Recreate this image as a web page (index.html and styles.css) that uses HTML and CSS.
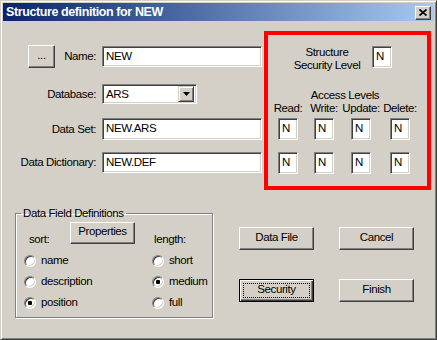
FILE: index.html
```html
<!DOCTYPE html>
<html lang="en">
<head>
  <meta charset="UTF-8">
  <title>Structure definition for NEW</title>
  <link rel="stylesheet" href="styles.css">
</head>
<body>

<div class="window">
  <div class="titlebar">
    <span class="title">Structure definition for NEW</span>
    <button class="close">
      <svg width="8" height="7" viewBox="0 0 8 7"><path d="M0.5 0.5 L7.5 6.5 M7.5 0.5 L0.5 6.5" stroke="#000" stroke-width="1.7"/></svg>
    </button>
  </div>

  <div class="dialog">
    <div class="top">
      <div class="fields">
        <div class="row row-name">
          <div class="label"><button class="btn btn-dots">...</button><span>Name:</span></div>
          <div class="input wide">NEW</div>
        </div>
        <div class="row row-db">
          <div class="label">Database:</div>
          <div class="input select">ARS<span class="arrow"><svg width="7" height="4" viewBox="0 0 7 4"><path d="M0 0 H7 L3.5 4 Z" fill="#000"/></svg></span></div>
        </div>
        <div class="row row-set">
          <div class="label">Data Set:</div>
          <div class="input wide">NEW.ARS</div>
        </div>
        <div class="row row-dict">
          <div class="label">Data Dictionary:</div>
          <div class="input wide">NEW.DEF</div>
        </div>
      </div>

      <div class="security">
        <div class="sec-level">
          <div class="sec-label">Structure<br>Security Level</div>
          <div class="input small">N</div>
        </div>
        <div class="access">
          <div class="access-title">Access Levels</div>
          <span>Read:</span>
          <span>Write:</span>
          <span>Update:</span>
          <span>Delete:</span>
          <div class="input small">N</div>
          <div class="input small">N</div>
          <div class="input small">N</div>
          <div class="input small">N</div>
          <div class="input small second">N</div>
          <div class="input small second">N</div>
          <div class="input small second">N</div>
          <div class="input small second">N</div>
        </div>
      </div>
    </div>

    <div class="bottom">
      <fieldset class="group">
        <legend>Data Field Definitions</legend>
        <div class="group-head">
          <span class="sort">sort:</span>
          <button class="btn btn-props">Properties</button>
          <span class="length">length:</span>
        </div>
        <div class="radios">
          <div class="radio-col">
            <div class="radio"><span class="dot"></span>name</div>
            <div class="radio"><span class="dot"></span>description</div>
            <div class="radio"><span class="dot checked"></span>position</div>
          </div>
          <div class="radio-col">
            <div class="radio"><span class="dot"></span>short</div>
            <div class="radio"><span class="dot checked"></span>medium</div>
            <div class="radio"><span class="dot"></span>full</div>
          </div>
        </div>
      </fieldset>

      <div class="buttons">
        <button class="btn btn-action">Data File</button>
        <button class="btn btn-action">Cancel</button>
        <button class="btn btn-action btn-default">Security</button>
        <button class="btn btn-action">Finish</button>
      </div>
    </div>
  </div>
</div>

</body>
</html>
```

FILE: styles.css
```css
body {
  margin: 0;
  font-family: "Liberation Sans", Arial, sans-serif;
  font-size: 11.5px;
  letter-spacing: -0.4px;
  line-height: 13px;
  color: #000;
  background: #d4d0c8;
}
.window {
  width: 437px;
  height: 340px;
  box-sizing: border-box;
  background: #d4d0c8;
  border: 1px solid;
  border-color: #d4d0c8 #404040 #404040 #d4d0c8;
  box-shadow: inset 1px 1px 0 #fff, inset -1px -1px 0 #808080;
  padding: 2px;
}
.titlebar {
  height: 18px;
  display: flex;
  align-items: center;
  justify-content: space-between;
  background: linear-gradient(to right, #0a246a, #a6caf0);
  padding: 0 3px;
}
.title {
  color: #fff;
  font-weight: bold;
  font-size: 12.5px;
  letter-spacing: -0.4px;
}
.close {
  width: 16px;
  height: 14px;
  padding: 0;
  margin-top: 1px;
  display: flex;
  align-items: center;
  justify-content: center;
  background: #d4d0c8;
  border: 1px solid;
  border-color: #fff #404040 #404040 #fff;
  box-shadow: inset -1px -1px 0 #808080;
}

.btn {
  font: inherit;
  letter-spacing: inherit;
  color: #000;
  background: #d4d0c8;
  border: 1px solid;
  border-color: #fff #404040 #404040 #fff;
  box-shadow: inset -1px -1px 0 #808080;
  padding: 0;
  box-sizing: border-box;
}
.input {
  box-sizing: border-box;
  background: #fff;
  border: 1px solid;
  border-color: #808080 #fff #fff #808080;
  box-shadow: inset 1px 1px 0 #404040, inset -1px -1px 0 #d4d0c8;
  padding: 3px 2px 0 3px;
}

/* top part */
.top {
  display: flex;
  margin-top: 10px;
  height: 159px;
}
.fields {
  margin-left: 12px;
  width: 247px;
}
.row {
  display: flex;
  align-items: center;
  gap: 6px;
}
.row-name { margin-top: 14px; height: 23px; }
.row-db { margin-top: 16px; height: 20px; }
.row-set { margin-top: 14px; height: 22px; }
.row-dict { margin-top: 12px; height: 21px; }
.label {
  width: 81px;
  flex: none;
  display: flex;
  align-items: center;
  justify-content: flex-end;
  white-space: nowrap;
}
.btn-dots {
  width: 27px;
  height: 23px;
  margin-left: 13px;
  margin-right: auto;
  padding-bottom: 3px;
}
.wide {
  width: 160px;
  height: 100%;
}
.row-name .wide { height: 21px; }
.select {
  width: 95px;
  height: 20px;
  display: flex;
  justify-content: space-between;
  padding: 2px 2px 2px 3px;
  align-items: center;
}
.arrow {
  width: 16px;
  height: 16px;
  box-sizing: border-box;
  display: flex;
  align-items: center;
  justify-content: center;
  background: #d4d0c8;
  border: 1px solid;
  border-color: #d4d0c8 #404040 #404040 #d4d0c8;
  box-shadow: inset 1px 1px 0 #fff, inset -1px -1px 0 #808080;
}

.security {
  margin-left: 2px;
  width: 167px;
  height: 159px;
  box-sizing: border-box;
  border: 4px solid #f00;
}
.sec-level {
  display: flex;
  align-items: flex-start;
  margin-top: 11px;
  margin-left: 22px;
  gap: 8px;
}
.sec-label {
  width: 74px;
  text-align: center;
  white-space: nowrap;
}
.small {
  width: 20px;
  height: 22px;
}
.access {
  display: grid;
  grid-template-columns: 36px 36px 38px 40px;
  margin-left: 2px;
  margin-top: 17px;
  justify-items: center;
}
.access-title {
  grid-column: 1 / -1;
}
.access span {
  white-space: nowrap;
  margin-bottom: 3px;
}
.access .second {
  margin-top: 12px;
}

/* bottom part */
.bottom {
  display: flex;
  margin-top: 16px;
}
.group {
  margin: 0 0 0 12px;
  width: 198px;
  min-width: 0;
  height: 112px;
  box-sizing: border-box;
  padding: 0 0 0 8px;
  border: 1px solid #808080;
  box-shadow: 1px 1px 0 #fff, inset 1px 1px 0 #fff;
  flex: none;
}
.group legend {
  margin-left: -3px;
  padding: 0 2px;
  line-height: 14px;
}
.group-head {
  display: flex;
  align-items: flex-end;
  margin-top: 2px;
  height: 22px;
}
.sort {
  margin-left: 5px;
  width: 41px;
  margin-bottom: -2px;
}
.btn-props {
  width: 65px;
  height: 22px;
  padding-bottom: 4px;
}
.length {
  margin-left: 19px;
  margin-bottom: -2px;
}
.radios {
  display: flex;
  margin-top: 6px;
}
.radio-col {
  width: 128px;
}
.radio-col + .radio-col {
  width: auto;
}
.radio {
  height: 21px;
  display: flex;
  align-items: center;
  gap: 5px;
  white-space: nowrap;
}
.dot {
  width: 12px;
  height: 12px;
  box-sizing: border-box;
  border-radius: 50%;
  background: #fff;
  border: 1px solid;
  border-color: #808080 #fff #fff #808080;
  box-shadow: inset 1px 1px 0 #404040, inset -1px -1px 0 #d4d0c8;
}
.dot.checked {
  background: radial-gradient(circle, #000 2px, #fff 2.5px);
}

.buttons {
  display: grid;
  grid-template-columns: 75px 75px;
  grid-template-rows: 23px 23px;
  column-gap: 25px;
  row-gap: 29px;
  margin-left: 26px;
  margin-top: 21px;
}
.btn-action {
  padding-bottom: 2px;
}
.btn-default {
  border: 1px solid #000;
  box-shadow: inset 1px 1px 0 #fff, inset -1px -1px 0 #404040, inset -2px -2px 0 #808080;
  outline: 1px dotted #000;
  outline-offset: -5px;
}
```
